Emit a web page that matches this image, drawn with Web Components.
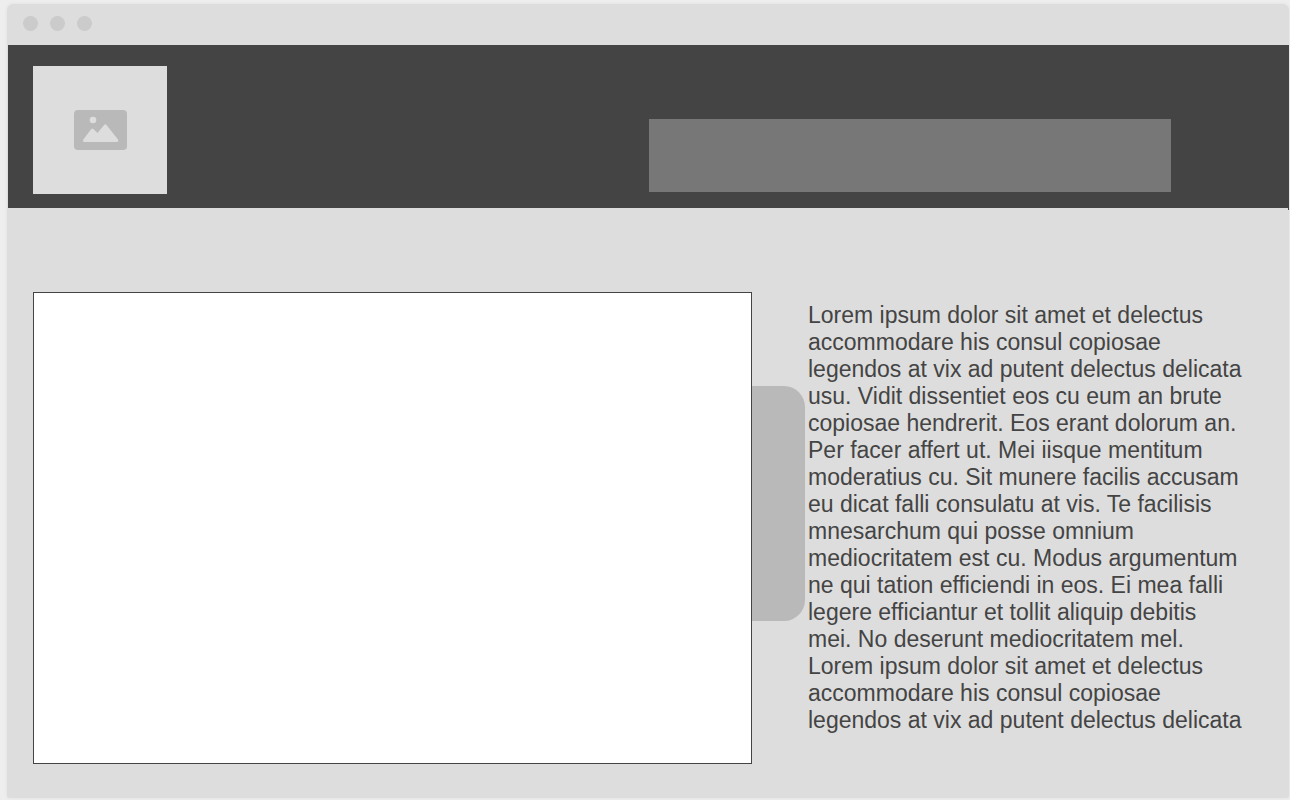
<!DOCTYPE html>
<html lang="en">
<head>
<meta charset="utf-8">
<title>Page wireframe</title>
<style>
  body { margin: 0; padding: 4px 1px 2px 7px; background: #eee; font-family: "Liberation Sans", Arial, sans-serif; color: #444; }
</style>
</head>
<body>
<wire-window>
  <wire-header slot="header"></wire-header>
  <wire-feature>Lorem ipsum dolor sit amet et delectus accommodare his consul copiosae legendos at vix ad putent delectus delicata usu. Vidit dissentiet eos cu eum an brute copiosae hendrerit. Eos erant dolorum an. Per facer affert ut. Mei iisque mentitum moderatius cu. Sit munere facilis accusam eu dicat falli consulatu at vis. Te facilisis mnesarchum qui posse omnium mediocritatem est cu. Modus argumentum ne qui tation efficiendi in eos. Ei mea falli legere efficiantur et tollit aliquip debitis mei. No deserunt mediocritatem mel. Lorem ipsum dolor sit amet et delectus accommodare his consul copiosae legendos at vix ad putent delectus delicata</wire-feature>
</wire-window>
<script>
  class WireElement extends HTMLElement {
    constructor() {
      super();
      this.attachShadow({ mode: "open" }).innerHTML = this.constructor.markup;
    }
  }

  customElements.define("wire-window", class extends WireElement {
    static markup = `
      <style>
        :host { display: block; background: #ddd; border-radius: 6px 6px 2px 2px; box-shadow: 0 0 4px rgba(0,0,0,.06); }
        .bar { display: flex; align-items: center; gap: 12px; height: 38px; padding: 0 16px 3px; }
        .dot { width: 15px; height: 15px; border-radius: 50%; background: #cbcbcb; }
      </style>
      <div class="bar"><span class="dot"></span><span class="dot"></span><span class="dot"></span></div>
      <slot name="header"></slot>
      <main><slot></slot></main>`;
  });

  customElements.define("wire-logo", class extends WireElement {
    static markup = `
      <style>
        :host { display: flex; align-items: center; justify-content: center; width: 134px; height: 128px; background: #ddd; }
        svg { display: block; }
      </style>
      <svg width="53" height="40" viewBox="0 0 53 40" role="img" aria-label="Logo">
        <rect width="53" height="40" rx="4" fill="#b9b9b9"/>
        <circle cx="19" cy="10" r="3.3" fill="#ddd"/>
        <path d="M10 32Q8.300 31.500 9.300 29.500L17.300 19Q18.300 17.800 19.400 19L23.500 23L30.300 14.700Q31.300 13.700 32.300 14.700L44 29.500Q45 31.500 43.300 32Z" fill="#ddd"/>
      </svg>`;
  });

  customElements.define("wire-header", class extends WireElement {
    static markup = `
      <style>
        :host { display: flex; justify-content: space-between; align-items: flex-end; position: relative; margin-left: 1px; padding: 21px 118px 14px 25px; background: #444; }
        :host::after { content: ""; position: absolute; right: 0; top: 100%; width: 1px; height: 2px; background: #444; }
        .block { width: 522px; height: 73px; margin-bottom: 2px; background: #777; }
      </style>
      <wire-logo></wire-logo>
      <div class="block"></div>`;
  });

  customElements.define("wire-feature", class extends WireElement {
    static markup = `
      <style>
        :host { display: grid; grid-template-columns: minmax(0, 1fr) 436px; column-gap: 56px; padding: 84px 45px 34px 26px; }
        .frame { position: relative; border: 1px solid #444; background: #fff; }
        .tab { position: absolute; left: calc(100% + 1px); top: 93px; width: 53px; height: 235px; border-radius: 0 21px 21px 0; background: #b9b9b9; }
        p { margin: 0; padding: 10px 0 30px; font-size: 23px; line-height: 27px; }
      </style>
      <div class="frame"><div class="tab"></div></div>
      <p><slot></slot></p>`;
  });

  customElements.whenDefined("wire-window");
</script>
</body>
</html>
